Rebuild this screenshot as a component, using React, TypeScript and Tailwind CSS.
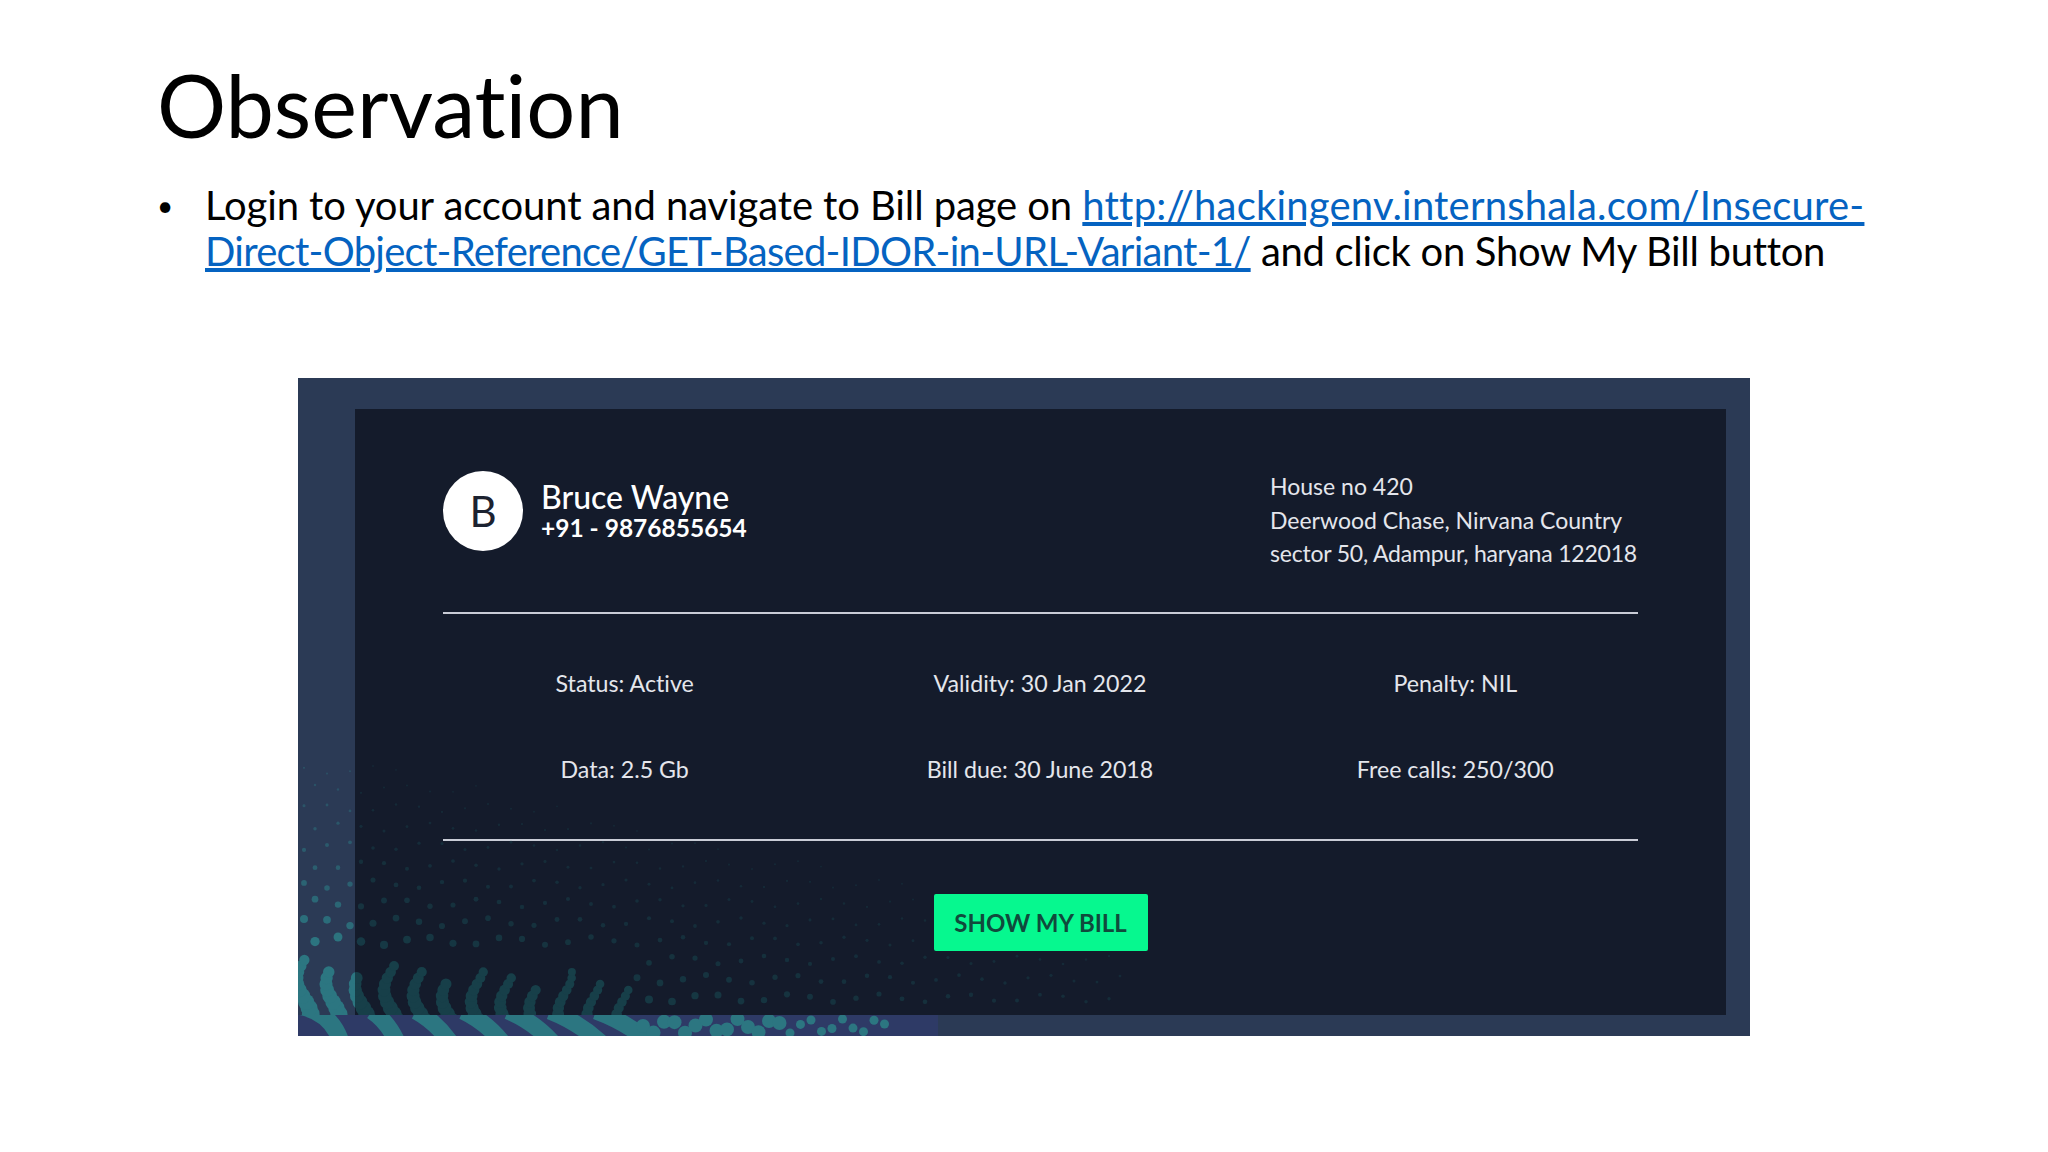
const stats = [
  'Status: Active',
  'Validity: 30 Jan 2022',
  'Penalty: NIL',
  'Data: 2.5 Gb',
  'Bill due: 30 June 2018',
  'Free calls: 250/300',
]

type Dot = { x: number; y: number; r: number }

// Halftone dots fading out from the bottom left corner of the panel
const dots: Dot[] = []
for (let row = 0; row < 18; row++) {
  for (let col = 0; col < 36; col++) {
    const x = col * 23 + (row % 2 ? 11 : 0) + 6
    const v = 38 + row * 19
    if (x < 335 && v < 78) continue
    const r = 11 * Math.exp(-v / 115 - x / 520)
    if (r > 0.9) dots.push({ x, y: 658 - v + Math.sin(col * 1.7 + row) * 4, r })
  }
}

// Wavy chains of overlapping dots just above the bottom strip
const chains: Dot[] = []
for (let c = 0; c < 12; c++) {
  const cx = c * 29 + 6
  const top = 78 - (c % 3) * 7 - c * 1.5
  for (let t = 16; t < top; t += 6) {
    const r = 10.5 * (1 - t / 150) * (1 - cx / 800)
    chains.push({ x: cx + Math.sin(t / 12 + c * 0.3) * 7, y: 658 - t, r })
  }
}

// Loose blobs where the stripes break up along the bottom strip
const blobs: Dot[] = []
for (let i = 0; i < 24; i++) {
  const x = 345 + i * 10.5
  blobs.push({ x, y: 648 + Math.sin(i * 1.9) * 7, r: i < 14 ? 7 : 4.5 })
}

const stripes = [
  'M-8 627 Q 32 630 43 664',
  'M74 633 Q 90 644 99 664',
  'M118 633 Q 138 644 152 664',
  'M165 633 Q 188 644 204 664',
  'M210 633 Q 236 644 254 664',
  'M252 633 Q 280 644 302 664',
  'M298 633 Q 328 644 352 664',
]

const Pattern = () => (
  <svg className="absolute inset-0 pointer-events-none" width="1452" height="658" viewBox="0 0 1452 658">
    <defs>
      <clipPath id="inner">
        <rect x="57" y="31" width="1371" height="606" />
      </clipPath>
      <clipPath id="left">
        <rect x="0" y="0" width="57" height="637" />
      </clipPath>
      <clipPath id="strip">
        <rect x="0" y="637" width="640" height="21" />
      </clipPath>
    </defs>
    <rect x="0" y="637" width="640" height="21" fill="#2e3a66" />
    <g fill="#2c7681" clipPath="url(#left)">
      {[...dots, ...chains].map((d, i) => (
        <circle key={i} cx={d.x} cy={d.y} r={d.r} opacity={Math.min(1, 0.2 + d.r / 6)} />
      ))}
    </g>
    <g fill="#173f49" clipPath="url(#inner)">
      {dots.map((d, i) => (
        <circle key={i} cx={d.x} cy={d.y} r={d.r} opacity={Math.min(1, 0.25 + d.r / 7)} />
      ))}
      {chains.map((d, i) => (
        <circle key={i} cx={d.x} cy={d.y} r={d.r} />
      ))}
    </g>
    <g clipPath="url(#strip)">
      <g fill="none" stroke="#2c7681" strokeWidth="17">
        {stripes.map((s) => (
          <path key={s} d={s} />
        ))}
      </g>
      <g fill="#2c7681">
        {blobs.map((d, i) => (
          <circle key={i} cx={d.x} cy={d.y} r={d.r} />
        ))}
      </g>
    </g>
  </svg>
)

export default function App() {
  return (
    <div className="w-[2048px] h-[1152px] bg-white overflow-hidden font-['Lato',sans-serif] text-black [font-variant-ligatures:none]">
      <div className="pl-[157px] pt-[55px]">
        <h1 className="text-[86.5px] leading-[100px] font-normal">Observation</h1>
        <div className="flex mt-[27px] text-[40px] leading-[46px]">
          <span className="w-[48px] shrink-0 text-[28px]">•</span>
          <p className="w-[1720px]">
            <span className="tracking-[-0.1px]">Login to your account and navigate to Bill page on</span>{' '}
            <a className="text-[#0563c1] underline">
              <span className="tracking-[0.2px]">http://hackingenv.internshala.com/Insecure-</span>
              <br />
              <span className="tracking-[-0.72px]">Direct-Object-Reference/GET-Based-IDOR-in-URL-Variant-1/</span>
            </a>{' '}
            <span className="tracking-[-0.3px]">and click on Show My Bill button</span>
          </p>
        </div>
      </div>

      <div className="relative w-[1452px] h-[658px] ml-[298px] mt-[104px] bg-[#2b3a55] pt-[31px] pl-[57px]">
        <div className="w-[1371px] h-[606px] bg-[#141b2b] text-white">
          <div className="flex justify-between h-[205px] mx-[88px] border-b-2 border-[#c9ccd6] pt-[62px]">
            <div className="flex items-start">
              <div className="w-[80px] h-[80px] rounded-full bg-white text-[#1c2230] text-[42px] flex items-center justify-center">
                B
              </div>
              <div className="ml-[18px] mt-[8px]">
                <p className="text-[32px] leading-[36px] font-medium">Bruce Wayne</p>
                <p className="text-[24.5px] leading-[26px] font-bold">+91 - 9876855654</p>
              </div>
            </div>
            <div className="text-[23px] leading-[33.5px] text-[#e4e6ec] -mt-[1px] w-[368px] shrink-0 whitespace-nowrap">
              <p>House no 420</p>
              <p>Deerwood Chase, Nirvana Country</p>
              <p className="tracking-[-0.2px]">sector 50, Adampur, haryana 122018</p>
            </div>
          </div>
          <div className="mx-[88px] h-[227px] border-b-2 border-[#c9ccd6] pt-[52px]">
            <div className="grid grid-cols-3 w-[1246px] -ml-[26px] gap-y-[52px] text-[23.2px] leading-[34px] text-[#e4e6ec] text-center">
              {stats.map((s) => (
                <p key={s}>{s}</p>
              ))}
            </div>
          </div>
          <div className="flex justify-center pt-[53px] relative z-10">
            <button className="w-[214px] h-[57px] rounded-[2px] bg-[#06f88f] text-[#104a3c] text-[24px] font-bold">
              SHOW MY BILL
            </button>
          </div>
        </div>
        <Pattern />
      </div>
    </div>
  )
}
